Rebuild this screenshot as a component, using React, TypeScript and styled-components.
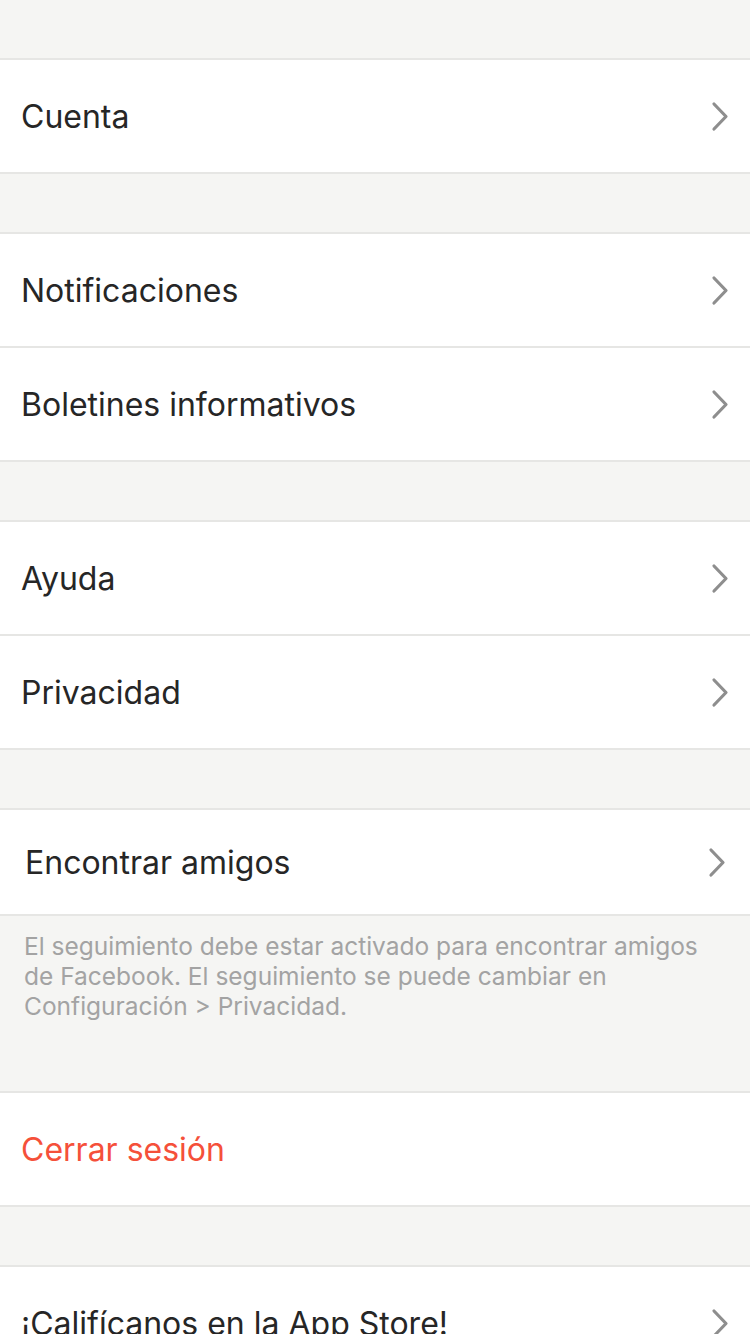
import React from "react";
import styled, { createGlobalStyle } from "styled-components";

const Global = createGlobalStyle`
  html, body { margin: 0; padding: 0; background: #f5f5f3; overflow: hidden; }
  body { font-family: Inter, "Liberation Sans", Arial, sans-serif; -webkit-font-smoothing: antialiased; }
`;

const Page = styled.div`
  width: 750px;
  background: #f5f5f3;
  display: flex;
  flex-direction: column;
`;

const Spacer = styled.div<{ $h: number }>`
  height: ${(p) => p.$h}px;
  flex-shrink: 0;
`;

const Group = styled.div`
  background: #ffffff;
  border-top: 2px solid #e6e6e4;
  border-bottom: 2px solid #e6e6e4;
  display: flex;
  flex-direction: column;
  flex-shrink: 0;
`;

const Divider = styled.div`
  height: 2px;
  background: #e6e6e4;
  flex-shrink: 0;
`;

const Row = styled.div<{ $h?: number; $pad?: number; $right?: number }>`
  height: ${(p) => p.$h ?? 112}px;
  flex-shrink: 0;
  display: flex;
  align-items: center;
  justify-content: space-between;
  padding: 0 ${(p) => p.$right ?? 21}px 0 ${(p) => p.$pad ?? 21}px;
  box-sizing: border-box;
`;

const Label = styled.span<{ $danger?: boolean; $size?: number }>`
  font-size: ${(p) => p.$size ?? 32}px;
  color: ${(p) => (p.$danger ? "#f5503a" : "#262626")};
`;

const Note = styled.div`
  padding: 15px 30px 0 24px;
  height: 175px;
  box-sizing: border-box;
  font-size: 24.5px;
  line-height: 30px;
  color: #a3a3a3;
  flex-shrink: 0;
`;

const Chevron = () => (
  <svg width="18" height="31" viewBox="0 0 18 31">
    <path d="M3 3 L15 15.5 L3 28" fill="none" stroke="#8e8e8e" strokeWidth="3.2" strokeLinecap="round" strokeLinejoin="round" />
  </svg>
);

type ItemProps = { label: string; danger?: boolean; chevron?: boolean; h?: number; pad?: number; right?: number; size?: number };

const Item = ({ label, danger, chevron = true, h, pad, right, size }: ItemProps) => (
  <Row $h={h} $pad={pad} $right={right}>
    <Label $danger={danger} $size={size}>{label}</Label>
    {chevron && <Chevron />}
  </Row>
);

export default function App() {
  return (
    <Page>
      <Global />
      <Spacer $h={58} />
      <Group>
        <Item label="Cuenta" />
      </Group>
      <Spacer $h={58} />
      <Group>
        <Item label="Notificaciones" />
        <Divider />
        <Item label="Boletines informativos" />
      </Group>
      <Spacer $h={58} />
      <Group>
        <Item label="Ayuda" />
        <Divider />
        <Item label="Privacidad" />
      </Group>
      <Spacer $h={58} />
      <Group>
        <Item label="Encontrar amigos" h={104} pad={25} right={24} size={32} />
      </Group>
      <Note>
        El seguimiento debe estar activado para encontrar amigos de Facebook. El seguimiento se puede cambiar en Configuración &gt; Privacidad.
      </Note>
      <Group>
        <Item label="Cerrar sesión" danger chevron={false} />
      </Group>
      <Spacer $h={58} />
      <Group>
        <Item label="¡Califícanos en la App Store!" />
      </Group>
    </Page>
  );
}
